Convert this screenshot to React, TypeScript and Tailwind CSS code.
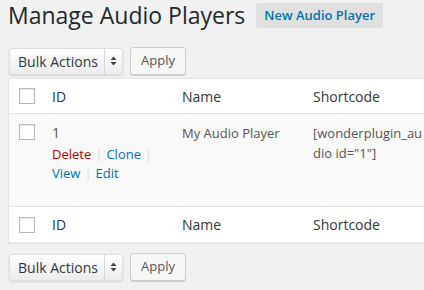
import React from "react";

const font = { fontFamily: '"Open Sans", "Liberation Sans", sans-serif' };

const Check = () => (
  <span className="block w-4 h-4 bg-white border border-[#b4b9be] shadow-[inset_0_1px_2px_rgba(0,0,0,0.1)]" />
);

const Sep = ({ last }: { last?: boolean }) => (
  <span className={`text-[#ddd] ${last ? "ml-[4px]" : "mx-[4px]"}`}>|</span>
);

const BulkBar = () => (
  <div className="flex items-center gap-[7px]">
    <div className="flex items-stretch h-[27px] w-[114px] ml-px rounded-[3px] border border-[#ddd] bg-gradient-to-b from-white to-[#ececec] shadow-[0_1px_2px_rgba(0,0,0,0.12)] text-[14px] text-[#32373c]">
      <span className="flex items-center pl-[8px] w-[94px] whitespace-nowrap">Bulk Actions</span>
      <span className="w-px bg-[#d6d6d6]" />
      <span className="flex flex-1 items-center justify-center">
        <svg width="7" height="10" viewBox="0 0 7 10">
          <path d="M3.5 0.5 L6.5 4 L0.5 4 Z" fill="#444" />
          <path d="M3.5 9.5 L6.5 6 L0.5 6 Z" fill="#444" />
        </svg>
      </span>
    </div>
    <button className="h-[28px] w-[56px] rounded-[3px] border border-[#ccc] bg-[#f7f7f7] shadow-[0_1px_0_#ccc] text-[13px] text-[#555]">
      Apply
    </button>
  </div>
);

const HeadRow = ({ top }: { top?: boolean }) => (
  <div
    className={`flex items-center text-[14px] text-[#32373c] ${
      top ? "h-[35px] border-b border-[#e1e1e1]" : "h-[36px] border-t border-[#e1e1e1]"
    }`}
  >
    <div className="w-[33px] pl-[10px]">
      <Check />
    </div>
    <div className="w-[130px] pl-[10px]">ID</div>
    <div className="w-[131px] pl-[10px]">Name</div>
    <div className="w-[140px] pl-[10px]">Shortcode</div>
  </div>
);

export default function App() {
  return (
    <div style={font} className="w-[424px] h-[290px] overflow-hidden bg-[#f1f1f1] pl-2">
      <div className="flex items-center h-[31px]">
        <h2 className="text-[23px] leading-[29px] text-[#23282d] font-normal">Manage Audio Players</h2>
        <span className="ml-[11px] h-[25px] px-[8px] flex items-center rounded-[2px] bg-[#e0e0e0] text-[13px] font-semibold text-[#0073aa]">
          New Audio Player
        </span>
      </div>

      <div className="mt-[16px]">
        <BulkBar />
      </div>

      <div className="mt-[3px] w-[480px] bg-white border border-[#e5e5e5] shadow-[0_1px_1px_rgba(0,0,0,0.04)]">
        <HeadRow top />
        <div className="flex h-[92px] bg-[#f9f9f9] text-[13px] leading-[19.5px] text-[#555]">
          <div className="w-[33px] pl-[10px] pt-[10px]">
            <Check />
          </div>
          <div className="w-[130px] pl-[10px] pt-[9px]">
            <div className="text-[14px]">1</div>
            <div className="mt-[2px] leading-[19px] w-[100px]">
              <span className="text-[#a00]">Delete</span>
              <Sep />
              <span className="text-[#0073aa]">Clone</span>
              <Sep last />
              <br />
              <span className="text-[#0073aa]">View</span>
              <Sep />
              <span className="text-[#0073aa]">Edit</span>
            </div>
          </div>
          <div className="w-[131px] pl-[10px] pt-[9px] text-[13px] leading-[20px]">My Audio Player</div>
          <div className="w-[140px] pl-[10px] pt-[9px] text-[13px] leading-[20px]">
            <div className="w-[110px] break-all">[wonderplugin_audio id="1"]</div>
          </div>
        </div>
        <HeadRow />
      </div>

      <div className="mt-[10px]">
        <BulkBar />
      </div>
    </div>
  );
}
